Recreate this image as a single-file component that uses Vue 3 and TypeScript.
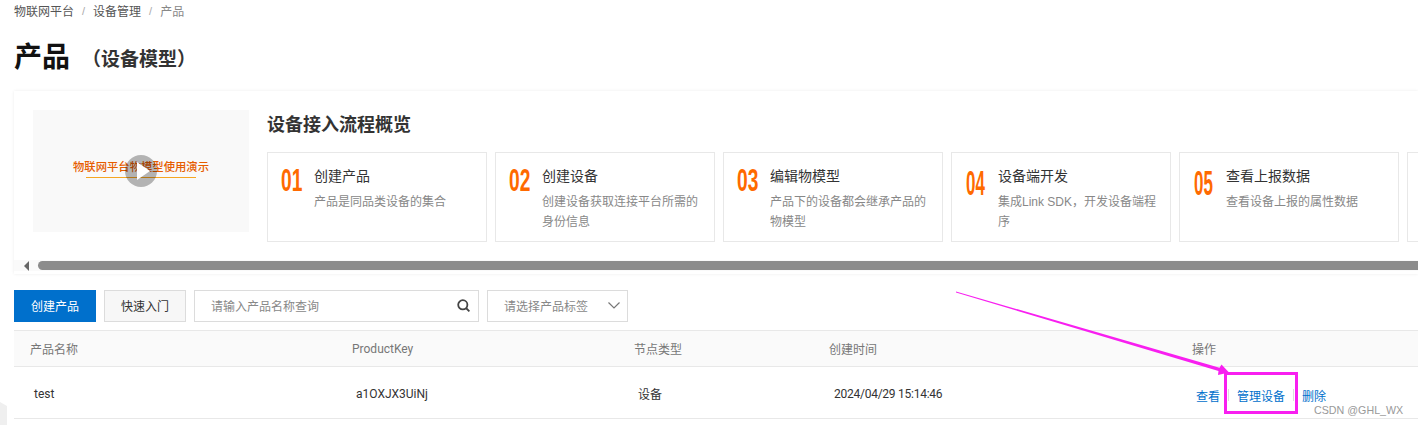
<template>
  <div class="page">
    <div class="crumbs">
      <span class="crumb">物联网平台</span>
      <span class="slash">/</span>
      <span class="crumb">设备管理</span>
      <span class="slash">/</span>
      <span class="crumb current">产品</span>
    </div>

    <div class="heading">
      <h1>产品</h1>
      <span class="sub">（设备模型）</span>
    </div>

    <div class="guide">
      <div class="guide-body">
        <div class="video">
          <div class="video-title">物联网平台物模型使用演示</div>
          <div class="video-line"></div>
          <svg class="play" width="32" height="32" viewBox="0 0 32 32">
            <circle cx="16" cy="16" r="16" fill="rgba(0, 0, 0, 0.28)" />
            <path d="M12 7 L25 16 L12 25 Z" fill="#fff" />
          </svg>
        </div>
        <div class="flow">
          <h2>设备接入流程概览</h2>
          <div class="steps">
            <div v-for="step in steps" :key="step.no" class="step">
              <template v-if="step.title">
                <span class="no" :class="{ low: step.low }">{{ step.no }}</span>
                <div class="step-text">
                  <div class="step-title">{{ step.title }}</div>
                  <div class="step-desc">{{ step.desc }}</div>
                </div>
              </template>
            </div>
          </div>
        </div>
      </div>
      <div class="scrollbar">
        <span class="arrow"></span>
        <span class="thumb"></span>
      </div>
    </div>

    <div class="toolbar">
      <button class="btn primary">创建产品</button>
      <button class="btn">快速入门</button>
      <div class="search">
        <span>请输入产品名称查询</span>
        <svg width="13" height="13" viewBox="0 0 13 13" fill="none" stroke="#444" stroke-width="1.8">
          <circle cx="5.8" cy="5.8" r="4.6" />
          <path d="M9 9 L12.4 12.4" />
        </svg>
      </div>
      <div class="select">
        <span>请选择产品标签</span>
        <svg width="12" height="7" viewBox="0 0 12 7" fill="none" stroke="#777" stroke-width="1.2">
          <path d="M0.5 0.5 L6 6 L11.5 0.5" />
        </svg>
      </div>
    </div>

    <div class="table">
      <div class="row head">
        <span v-for="col in columns" :key="col">{{ col }}</span>
      </div>
      <div class="row body">
        <span>test</span>
        <span>a1OXJX3UiNj</span>
        <span>设备</span>
        <span class="date">2024/04/29 15:14:46</span>
        <span class="ops">
          <a>查看</a><i></i><a>管理设备</a><i></i><a>删除</a>
        </span>
      </div>
    </div>

    <svg class="mark" width="1418" height="425" viewBox="0 0 1418 425">
      <path d="M0 402 L7 406 V425 H0 Z" fill="#efefef" />
      <path
        d="M956 291.5 L1219.5 367.8 L1221.5 364.5 L1229 372.5 L1218 375 L1218.5 371 L956 292.5 Z"
        fill="#f81ff0"
      />
      <rect x="1225.5" y="373.5" width="71" height="39" fill="none" stroke="#f81ff0" stroke-width="3" />
    </svg>
    <span class="watermark">CSDN @GHL_WX</span>
  </div>
</template>

<script setup lang="ts">
interface Step {
  no: string;
  title: string;
  desc: string;
  // 04、05 的数字图比前三个更窄更靠下
  low?: boolean;
}

const steps: Step[] = [
  { no: "01", title: "创建产品", desc: "产品是同品类设备的集合" },
  { no: "02", title: "创建设备", desc: "创建设备获取连接平台所需的身份信息" },
  { no: "03", title: "编辑物模型", desc: "产品下的设备都会继承产品的物模型" },
  { no: "04", title: "设备端开发", desc: "集成Link SDK，开发设备端程序", low: true },
  { no: "05", title: "查看上报数据", desc: "查看设备上报的属性数据", low: true },
  { no: "06", title: "", desc: "" },
];

const columns = ["产品名称", "ProductKey", "节点类型", "创建时间", "操作"];
</script>

<style>
html,
body {
  margin: 0;
  background: #fff;
  overflow: hidden;
}
</style>

<style scoped>
.page {
  position: relative;
  width: 1418px;
  height: 425px;
  overflow: hidden;
  padding-left: 14px;
  box-sizing: border-box;
  font-family: Roboto, "Noto Sans CJK SC", sans-serif;
  font-size: 12px;
  color: #333;
}

.crumbs {
  display: flex;
  align-items: center;
  height: 21px;
  gap: 8px;
  color: #555;
}
.slash {
  font-family: "Liberation Sans", sans-serif;
  color: #aaa;
  font-size: 11px;
}
.current {
  color: #888;
}

.heading {
  display: flex;
  align-items: center;
  height: 40px;
  margin-top: 17px;
}
h1 {
  margin: 0;
  font-size: 28px;
  line-height: 40px;
  color: #111;
}
.sub {
  margin: -2px 0 0 12px;
  font-size: 19px;
  font-weight: 700;
  color: #333;
}

.guide {
  margin-top: 13px;
  height: 183px;
  box-shadow: 0 0 3px rgba(0, 0, 0, 0.08);
  display: flex;
  flex-direction: column;
}
.guide-body {
  display: flex;
  padding: 19px 0 0 19px;
  gap: 18px;
  overflow: hidden;
  height: 160px;
  box-sizing: border-box;
}
.video {
  position: relative;
  flex: none;
  width: 216px;
  height: 122px;
  background: #f9f9f9;
  display: flex;
  flex-direction: column;
  align-items: center;
  justify-content: center;
}
.video-title {
  color: #e65c00;
  font-size: 11.33px;
  font-weight: 500;
  line-height: 16px;
  margin-top: -5px;
}
.video-line {
  width: 110px;
  height: 1px;
  background: #f5a623;
  margin-top: 2px;
}
.play {
  position: absolute;
  left: 92px;
  top: 45px;
}
.flow h2 {
  margin: 1px 0 0;
  font-size: 18px;
  line-height: 28px;
  color: #333;
}
.steps {
  display: flex;
  gap: 8px;
  margin-top: 13px;
}
.step {
  flex: none;
  width: 220px;
  height: 90px;
  box-sizing: border-box;
  border: 1px solid #e8e8e8;
  display: flex;
  padding: 14px 12px 0 13px;
}
.no {
  flex: none;
  width: 21px;
  height: 28px;
  margin-top: -1px;
  font-family: "Liberation Sans", sans-serif;
  font-weight: 700;
  font-size: 32px;
  line-height: 28px;
  color: #ff6a00;
  transform: scaleX(0.6);
  transform-origin: left center;
  white-space: nowrap;
}
.no.low {
  margin-top: 2px;
  transform: translateX(1px) scale(0.53, 1.08);
}
.step-text {
  margin-left: 12px;
}
.step-title {
  font-size: 14px;
  line-height: 18px;
  color: #333;
}
.step-desc {
  margin-top: 7px;
  font-family: "Liberation Sans", "Noto Sans CJK SC", sans-serif;
  font-size: 12px;
  line-height: 20px;
  color: #888;
}

.scrollbar {
  display: flex;
  align-items: center;
  height: 11px;
  margin-top: 9px;
  background: #fafafa;
  padding-left: 10px;
}
.arrow {
  width: 0;
  height: 0;
  border-style: solid;
  border-width: 5px 5px 5px 0;
  border-color: transparent #666 transparent transparent;
}
.thumb {
  flex: 1;
  height: 9px;
  margin-left: 9px;
  background: #8c8c8c;
  border-radius: 5px 0 0 5px;
}

.toolbar {
  display: flex;
  gap: 8px;
  height: 32px;
  margin-top: 16px;
}
.btn {
  width: 82px;
  height: 32px;
  padding: 0 0 1px;
  border: 1px solid #dcdcdc;
  background: #f7f7f7;
  color: #333;
  font: inherit;
}
.btn.primary {
  border-color: #0070cc;
  background: #0070cc;
  color: #fff;
}
.search,
.select {
  display: flex;
  align-items: center;
  justify-content: space-between;
  box-sizing: border-box;
  height: 32px;
  border: 1px solid #dcdcdc;
  color: #888;
}
.search {
  width: 285px;
  padding: 0 8px 2px 16px;
}
.select {
  width: 141px;
  padding: 0 7px 2px 16px;
}

.table {
  margin-top: 8px;
  margin-right: -14px;
}
.row {
  display: grid;
  grid-template-columns: 322px 282px 195px 363px 1fr;
  align-items: center;
  border-bottom: 1px solid #e8e8e8;
  box-sizing: border-box;
}
.head {
  height: 37px;
  padding-left: 16px;
  background: #fafafa;
  border-top: 1px solid #e8e8e8;
  color: #777;
}
.body {
  height: 52px;
  padding-top: 2px;
  padding-left: 20px;
  color: #333;
}
.date {
  margin-left: 1px;
  letter-spacing: -0.25px;
}
.ops {
  display: flex;
  align-items: center;
  margin-top: 3px;
}
.ops a {
  color: #0070cc;
}
.ops i {
  width: 1px;
  height: 12px;
  margin: 0 8px;
  background: #ddd;
}

.mark {
  position: absolute;
  left: 0;
  top: 0;
  pointer-events: none;
}
.watermark {
  position: absolute;
  left: 1314px;
  top: 404px;
  font-family: "Liberation Sans", sans-serif;
  font-size: 10.7px;
  color: #999;
}
</style>
